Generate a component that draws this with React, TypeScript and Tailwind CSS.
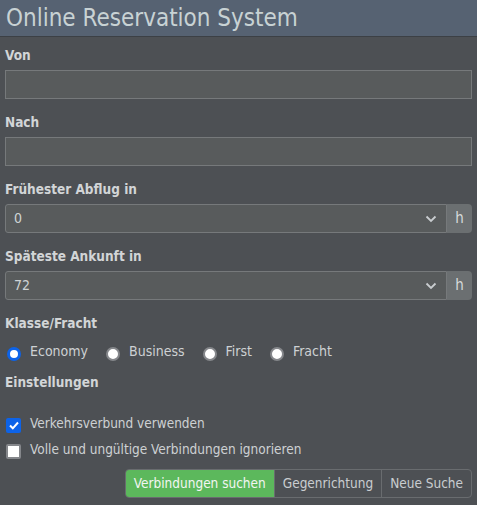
const font = { fontFamily: "'DejaVu Sans Condensed', Tahoma, 'DejaVu Sans', sans-serif" };

const Label: React.FC<{ text: string }> = ({ text }) => (
  <div className="h-5 pt-[3px] leading-[17px] text-[13.5px] font-bold text-[#d2d5d7]">{text}</div>
);

const TextField: React.FC<{ label: string }> = ({ label }) => (
  <div className="mb-3">
    <Label text={label} />
    <div className="mt-1.5 h-[29px] border border-[#76797b] bg-[#585b5c]" />
  </div>
);

const SelectField: React.FC<{ label: string; value: string }> = ({ label, value }) => (
  <div className="mb-3">
    <Label text={label} />
    <div className="mt-1.5 flex h-[29px]">
      <div className="flex flex-1 items-center justify-between rounded-l-[3px] border border-[#76797b] bg-[#585b5c] pl-2 pr-[9px] text-[14px] text-[#cfd3d5]">
        <span>{value}</span>
        <svg width="12" height="8" viewBox="0 0 12 8" fill="none" stroke="#c9cdd0" strokeWidth="1.8">
          <path d="M1.5 1.5 L6 6 L10.5 1.5" />
        </svg>
      </div>
      <div className="flex w-[25px] items-center justify-center rounded-r-[4px] bg-[#6b6f71] text-[15px] text-[#d6d9db]">
        h
      </div>
    </div>
  </div>
);

const Radio: React.FC<{ label: string; checked?: boolean }> = ({ label, checked }) => (
  <label className="flex items-center gap-[9px]">
    {checked ? (
      <span className="h-[14px] w-[14px] rounded-full border-[3px] border-[#0d63e8] bg-white" />
    ) : (
      <span className="h-[14px] w-[14px] rounded-full border-2 border-[#85878b] bg-white" />
    )}
    <span className="-mt-1">{label}</span>
  </label>
);

const Checkbox: React.FC<{ label: string; checked?: boolean }> = ({ label, checked }) => (
  <label className="flex items-center gap-[9px]">
    {checked ? (
      <span className="flex h-[15px] w-[15px] items-center justify-center rounded-[2px] bg-[#0d63e8]">
        <svg width="10" height="9" viewBox="0 0 10 9" fill="none" stroke="white" strokeWidth="2">
          <path d="M1 4.5 L3.8 7.3 L9 1.5" />
        </svg>
      </span>
    ) : (
      <span className="h-[15px] w-[15px] rounded-[2px] border-2 border-[#85878b] bg-white" />
    )}
    <span className="-mt-1">{label}</span>
  </label>
);

export default function App() {
  return (
    <div className="h-[505px] w-[477px] bg-[#4d5054]" style={font}>
      <div className="h-[37px] border-b border-[#3c4045] bg-[#566272] pl-[6px] text-[24px] leading-[37px] text-[#c8d2d4]">
        Online Reservation System
      </div>
      <div className="px-[5px] pt-[7px]">
        <TextField label="Von" />
        <TextField label="Nach" />
        <SelectField label="Frühester Abflug in" value="0" />
        <SelectField label="Späteste Ankunft in" value="72" />
        <Label text="Klasse/Fracht" />
        <div className="mt-[13px] flex items-center gap-[18px] pl-[2px] text-[14px] text-[#cdd1d3]">
          <Radio label="Economy" checked />
          <Radio label="Business" />
          <Radio label="First" />
          <Radio label="Fracht" />
        </div>
        <div className="mt-[9px]">
          <Label text="Einstellungen" />
        </div>
        <div className="mt-[26px] flex flex-col gap-[10px] pl-[1px] text-[13.5px] text-[#cdd1d3]">
          <Checkbox label="Verkehrsverbund verwenden" checked />
          <Checkbox label="Volle und ungültige Verbindungen ignorieren" />
        </div>
        <div className="mt-[9px] flex justify-end">
          <div className="flex h-[29px] overflow-hidden rounded-[4px] border border-[#696c6f] text-[13.5px]">
            <button className="bg-[#5cb85c] px-[8px] text-[#f2f5f2]">Verbindungen suchen</button>
            <button className="border-l border-[#696c6f] px-[8px] text-[#c9cdd0]">Gegenrichtung</button>
            <button className="border-l border-[#696c6f] px-[8px] text-[#c9cdd0]">Neue Suche</button>
          </div>
        </div>
      </div>
    </div>
  );
}
